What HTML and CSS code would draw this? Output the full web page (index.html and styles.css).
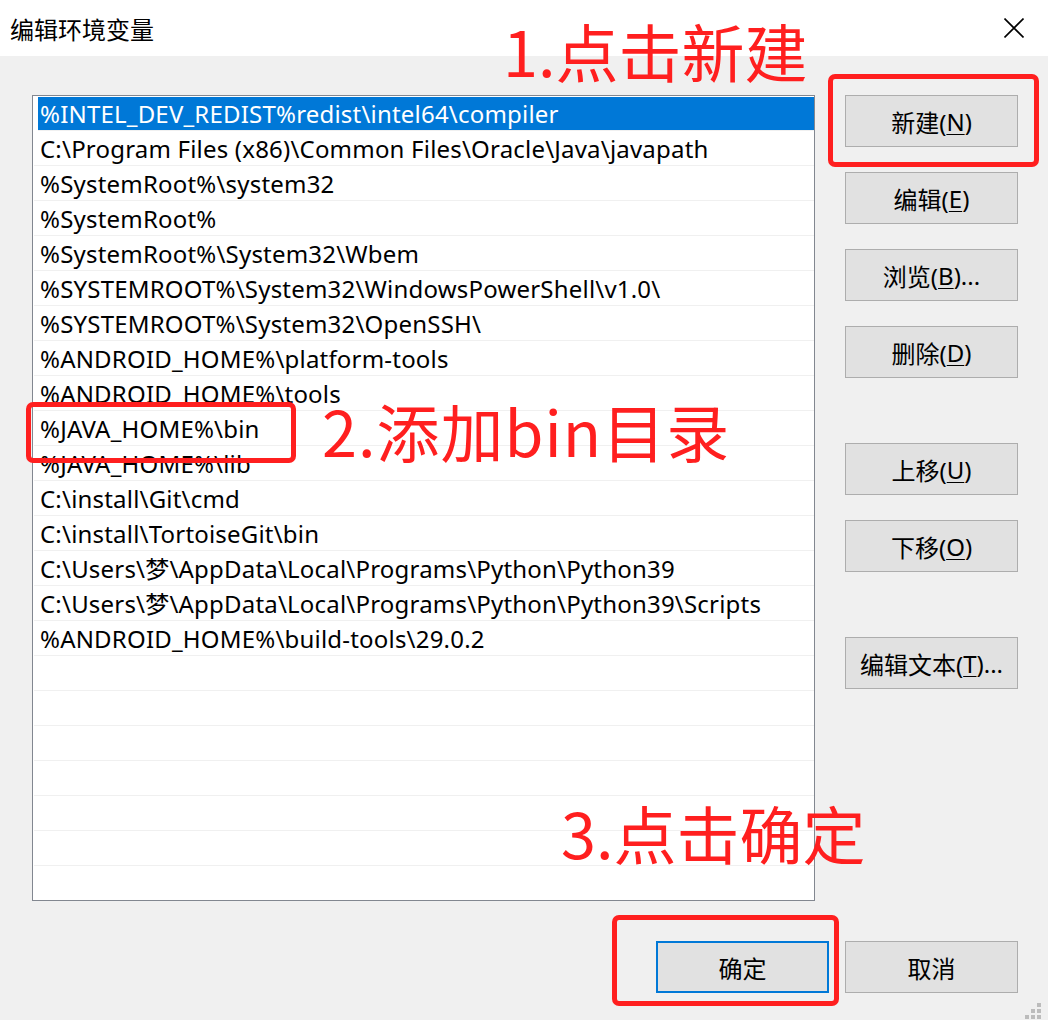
FILE: index.html
```html
<!DOCTYPE html>
<html lang="zh-CN">
    <head>
        <meta charset="utf-8" />
        <title>编辑环境变量</title>
        <link rel="stylesheet" href="styles.css">
    </head>

    <body>
        <div class="window">
            <div class="titlebar">
                <span class="title">编辑环境变量</span>
                <svg class="close" width="20" height="20" viewBox="0 0 20 20">
                    <path d="M0.5 0.5 L19.5 19.5 M19.5 0.5 L0.5 19.5" stroke="#000" stroke-width="1.6" fill="none"/>
                </svg>
            </div>

            <div class="main">
                <div class="list">
                    <div class="row selected">%INTEL_DEV_REDIST%redist\intel64\compiler</div>
                    <div class="row">C:\Program Files (x86)\Common Files\Oracle\Java\javapath</div>
                    <div class="row">%SystemRoot%\system32</div>
                    <div class="row">%SystemRoot%</div>
                    <div class="row">%SystemRoot%\System32\Wbem</div>
                    <div class="row">%SYSTEMROOT%\System32\WindowsPowerShell\v1.0\</div>
                    <div class="row">%SYSTEMROOT%\System32\OpenSSH\</div>
                    <div class="row">%ANDROID_HOME%\platform-tools</div>
                    <div class="row">%ANDROID_HOME%\tools</div>
                    <div class="row">%JAVA_HOME%\bin</div>
                    <div class="row">%JAVA_HOME%\lib</div>
                    <div class="row">C:\install\Git\cmd</div>
                    <div class="row">C:\install\TortoiseGit\bin</div>
                    <div class="row">C:\Users\梦\AppData\Local\Programs\Python\Python39</div>
                    <div class="row">C:\Users\梦\AppData\Local\Programs\Python\Python39\Scripts</div>
                    <div class="row">%ANDROID_HOME%\build-tools\29.0.2</div>
                    <div class="row"></div>
                    <div class="row"></div>
                    <div class="row"></div>
                    <div class="row"></div>
                    <div class="row"></div>
                    <div class="row"></div>
                    <div class="row"></div>
                </div>

                <div class="side">
                    <div class="btn">新建(<u>N</u>)</div>
                    <div class="btn">编辑(<u>E</u>)</div>
                    <div class="btn">浏览(<u>B</u>)...</div>
                    <div class="btn">删除(<u>D</u>)</div>
                    <div class="btn gap-big">上移(<u>U</u>)</div>
                    <div class="btn">下移(<u>O</u>)</div>
                    <div class="btn gap-big">编辑文本(<u>T</u>)...</div>
                </div>
            </div>

            <div class="footer">
                <div class="btn default">确定</div>
                <div class="btn">取消</div>
            </div>

            <svg class="grip" width="18" height="17" viewBox="0 0 18 17">
                <rect x="12" y="0" width="4" height="4" fill="#bcbcbc"/>
                <rect x="6" y="6" width="4" height="4" fill="#bcbcbc"/>
                <rect x="12" y="6" width="4" height="4" fill="#bcbcbc"/>
                <rect x="0" y="12" width="4" height="4" fill="#bcbcbc"/>
                <rect x="6" y="12" width="4" height="4" fill="#bcbcbc"/>
                <rect x="12" y="12" width="4" height="4" fill="#bcbcbc"/>
            </svg>

            <!-- annotations -->
            <div class="note note-1">1.点击新建</div>
            <div class="mark mark-1"></div>
            <div class="note note-2">2.添加bin目录</div>
            <div class="mark mark-2"></div>
            <div class="note note-3">3.点击确定</div>
            <div class="mark mark-3"></div>
        </div>
    </body>
</html>
```

FILE: styles.css
```css
* {
    box-sizing: border-box;
}
body {
    margin: 0;
    background: #f0f0f0;
    font-family: "Noto Sans", "Noto Sans CJK SC", sans-serif;
    color: #000;
}
.window {
    position: relative;
    width: 1048px;
    height: 1020px;
    overflow: hidden;
    background: #f0f0f0;
}
.titlebar {
    height: 56px;
    background: #fff;
    display: flex;
    align-items: center;
    justify-content: space-between;
    padding: 0 24px 0 10px;
}
.title {
    font-family: "Noto Sans CJK SC", sans-serif;
    font-size: 24px;
}
.close {
    display: block;
}
.main {
    display: flex;
    gap: 30px;
    padding: 39px 30px 0 32px;
}
.list {
    width: 783px;
    height: 806px;
    border: 1px solid #828790;
    background: #fff;
    overflow: hidden;
}
.row {
    height: 35px;
    margin-left: 1px;
    padding-left: 6px;
    border-bottom: 1px solid #f0f0f0;
    font-size: 24px;
    letter-spacing: 0.2px;
    line-height: 35px;
    white-space: nowrap;
}
.row.selected {
    margin-left: 5px;
    padding-left: 2px;
    border-top: 1px solid #fff;
    line-height: 33px;
    background: #0078d7;
    color: #fff;
}
.side {
    display: flex;
    flex-direction: column;
    gap: 25px;
    width: 173px;
}
.btn {
    width: 173px;
    height: 52px;
    display: flex;
    align-items: center;
    justify-content: center;
    background: #e1e1e1;
    border: 1px solid #adadad;
    font-size: 24px;
}
.btn u {
    text-underline-offset: 3px;
    text-decoration-thickness: 1px;
}
.side .gap-big {
    margin-top: 40px;
}
.footer {
    display: flex;
    justify-content: flex-end;
    gap: 16px;
    padding: 40px 30px 0 0;
}
.btn.default {
    border: 2px solid #0078d7;
}
.grip {
    position: absolute;
    right: 5px;
    bottom: 0;
}
.note {
    position: absolute;
    font-family: "Noto Sans CJK SC", sans-serif;
    font-size: 63px;
    line-height: 1;
    color: #ff1f1f;
    white-space: nowrap;
}
.note-1 {
    left: 503px;
    top: 18px;
}
.note-2 {
    left: 322px;
    top: 398px;
    letter-spacing: 1px;
}
.note-3 {
    left: 561px;
    top: 800px;
}
.mark {
    position: absolute;
    border: 5px solid #ff1f1f;
    border-radius: 7px;
}
.mark-1 {
    left: 828px;
    top: 74px;
    width: 211px;
    height: 93px;
}
.mark-2 {
    left: 26px;
    top: 402px;
    width: 270px;
    height: 61px;
}
.mark-3 {
    left: 612px;
    top: 915px;
    width: 227px;
    height: 91px;
}
```
